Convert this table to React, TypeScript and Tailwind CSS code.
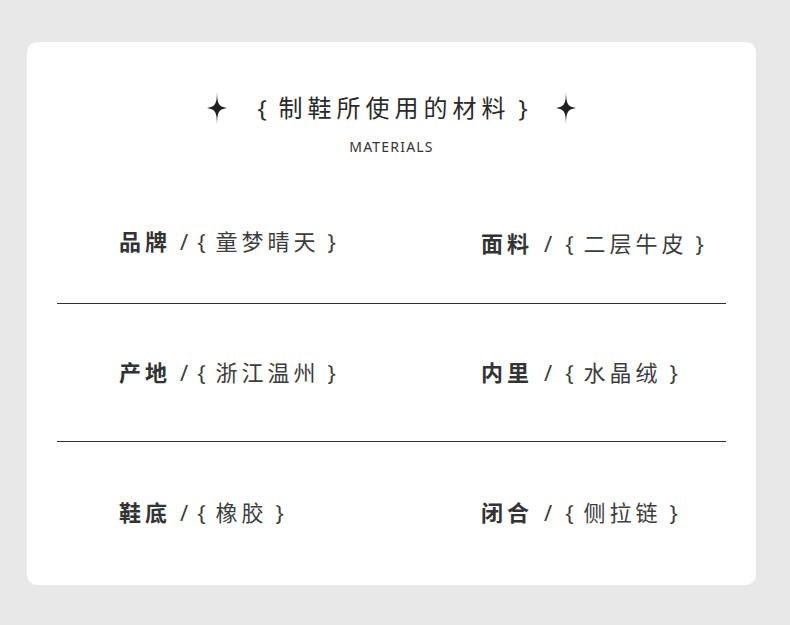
import React from 'react';

const Sparkle: React.FC = () => (
  <svg width="20" height="32" viewBox="0 0 20 32">
    <path d="M10 0 C10.4 11 10.8 14.6 20 16 C10.8 17.4 10.4 21 10 32 C9.6 21 9.2 17.4 0 16 C9.2 14.6 9.6 11 10 0 Z" fill="#231f20" />
  </svg>
);

const Item: React.FC<{ label: string; value: string; right?: boolean; className?: string }> = ({ label, value, right, className }) => (
  <div className={`flex items-center text-[22px] text-[#3d3d3d] ${className ?? ''}`}>
    <span className="font-bold tracking-[4px] text-[#333]">{label}</span>
    <span className={right ? 'ml-[11px]' : 'ml-[9px]'}>/</span>
    <span className={right ? 'ml-[13px]' : 'ml-[9px]'}>{'{'}</span>
    <span className="ml-[10px] tracking-[4px]">{value}</span>
    <span className="ml-[8px]">{'}'}</span>
  </div>
);

const rows = [
  { a: ['品牌', '童梦晴天'], b: ['面料', '二层牛皮'], h: 'h-[123px]' },
  { a: ['产地', '浙江温州'], b: ['内里', '水晶绒'], h: 'h-[137px]' },
  { a: ['鞋底', '橡胶'], b: ['闭合', '侧拉链'], h: 'h-[141px]' },
];

export default function App() {
  return (
    <div
      className="w-[790px] h-[625px] bg-[#e7e8e7] pt-[42px] pl-[27px]"
      style={{ fontFamily: '"Noto Sans", "Noto Sans CJK SC", sans-serif' }}
    >
      <div className="w-[729px] h-[543px] bg-white rounded-[10px] px-[30px] flex flex-col">
        <div className="h-[138px] flex flex-col items-center pt-[50px]">
          <div className="flex items-center text-[24px] leading-[32px] text-[#2a2a2a]">
            <Sparkle />
            <span className="ml-[30px]">{'{'}</span>
            <span className="ml-[12px] tracking-[5px]">制鞋所使用的材料</span>
            <span className="ml-[8px]">{'}'}</span>
            <span className="ml-[28px]"><Sparkle /></span>
          </div>
          <div className="mt-[12px] text-[14px] tracking-[1.2px] text-[#333]">MATERIALS</div>
        </div>
        {rows.map((r, i) => (
          <React.Fragment key={i}>
            {i > 0 && <div className="h-px bg-[#333]" />}
            <div className={`${r.h} flex items-center pl-[62px]`}>
              <Item label={r.a[0]} value={r.a[1]} className="w-[362px]" />
              <Item label={r.b[0]} value={r.b[1]} right className={i === 0 ? 'mt-[4px]' : ''} />
            </div>
          </React.Fragment>
        ))}
      </div>
    </div>
  );
}
